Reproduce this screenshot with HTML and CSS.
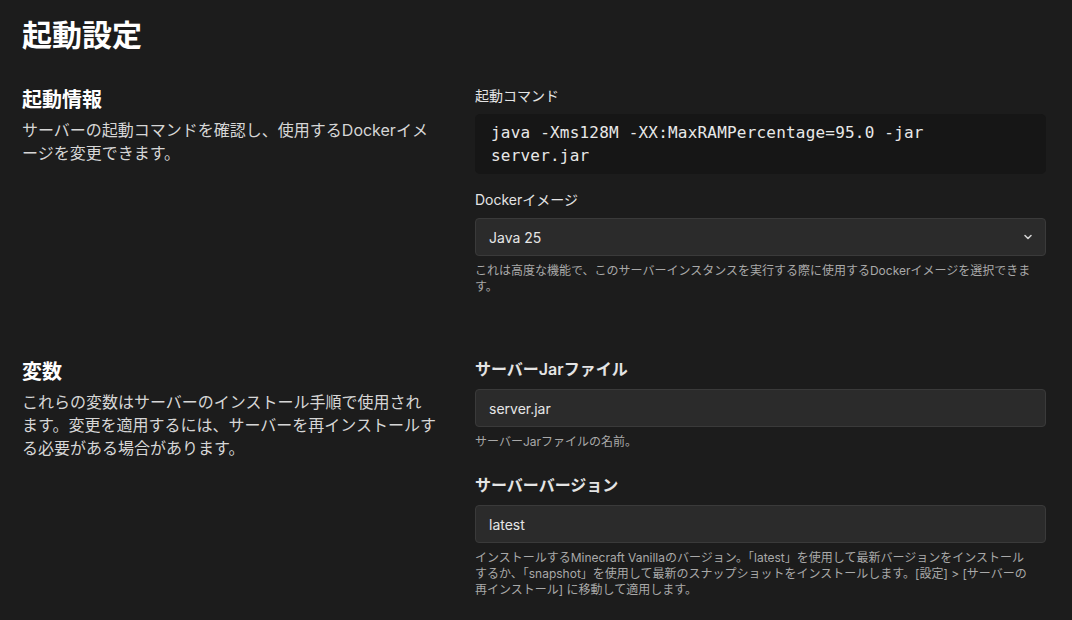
FILE: index.html
```html
<!DOCTYPE html>
<html lang="ja">
<head>
    <meta charset="UTF-8">
    <meta name="viewport" content="width=device-width, initial-scale=1.0">
    <title>起動設定</title>
    <link rel="stylesheet" href="styles.css">
</head>
<body>
    <main class="page">
        <h1 class="page__title">起動設定</h1>

        <section class="section">
            <div class="section__info">
                <h2 class="section__title">起動情報</h2>
                <p class="section__desc">サーバーの起動コマンドを確認し、使用するDockerイメージを変更できます。</p>
            </div>
            <div class="section__fields">
                <div class="field">
                    <div class="field__label">起動コマンド</div>
                    <code class="command">java -Xms128M -XX:MaxRAMPercentage=95.0 -jar server.jar</code>
                </div>
                <div class="field">
                    <div class="field__label">Dockerイメージ</div>
                    <div class="select">
                        <span>Java 25</span>
                        <svg class="select__icon" width="12" height="12" viewBox="0 0 12 12">
                            <path d="M3 4.5 6 7.5 9 4.5" fill="none" stroke="currentColor" stroke-width="1.6" stroke-linecap="round" stroke-linejoin="round"/>
                        </svg>
                    </div>
                    <p class="field__help">これは高度な機能で、このサーバーインスタンスを実行する際に使用するDockerイメージを選択できます。</p>
                </div>
            </div>
        </section>

        <section class="section section--vars">
            <div class="section__info">
                <h2 class="section__title">変数</h2>
                <p class="section__desc">これらの変数はサーバーのインストール手順で使用され<br>ます。変更を適用するには、サーバーを再インストールす<br>る必要がある場合があります。</p>
            </div>
            <div class="section__fields">
                <div class="field field--var">
                    <div class="field__label field__label--strong">サーバーJarファイル</div>
                    <div class="input">server.jar</div>
                    <p class="field__help">サーバーJarファイルの名前。</p>
                </div>
                <div class="field field--var">
                    <div class="field__label field__label--strong">サーバーバージョン</div>
                    <div class="input">latest</div>
                    <p class="field__help">インストールするMinecraft Vanillaのバージョン。「latest」を使用して最新バージョンをインストール<br>するか、「snapshot」を使用して最新のスナップショットをインストールします。[設定] &gt; [サーバーの<br>再インストール] に移動して適用します。</p>
                </div>
            </div>
        </section>
    </main>
</body>
</html>
```

FILE: styles.css
```css
:root {
    --pageBgColor: #1c1c1c;
    --fieldBgColor: #2b2b2b;
    --fieldBorderColor: #3a3a3a;
    --codeBgColor: #161616;
}

html,
body {
    height: 100%;
}

body {
    margin: 0;
    background-color: var(--pageBgColor);
    color: #fff;
    font-family: Inter, "Noto Sans CJK JP", sans-serif;
}

.page {
    padding: 17px 26px 0 22px;
}

.page__title {
    margin: 0 0 33px;
    font-size: 30px;
    line-height: 36px;
    font-weight: 700;
}

.section {
    display: grid;
    grid-template-columns: 420px 1fr;
    column-gap: 33px;
    align-items: start;
}

.section--vars {
    margin-top: 62px;
}

.section__title {
    margin: 0;
    font-size: 20px;
    line-height: 28px;
    font-weight: 700;
}

.section--vars .section__title {
    margin-top: 1px;
}

.section__desc {
    margin: 5px 0 0;
    font-size: 16px;
    line-height: 23px;
    color: #d6d6d6;
}

.field + .field {
    margin-top: 16px;
}

.field--var + .field--var {
    margin-top: 23px;
}

.field__label {
    margin-bottom: 8px;
    font-size: 14px;
    line-height: 20px;
    color: #e4e4e4;
}

.field__label--strong {
    font-size: 16px;
    line-height: 24px;
    font-weight: 600;
}

.command {
    display: block;
    padding: 7px 20px 7px 16px;
    border-radius: 5px;
    background-color: var(--codeBgColor);
    color: #e8e8e8;
    font-family: "DejaVu Sans Mono", monospace;
    font-size: 16px;
    line-height: 23px;
    letter-spacing: 0.2px;
}

.select,
.input {
    display: flex;
    align-items: center;
    box-sizing: border-box;
    height: 38px;
    padding: 0 13px;
    border: 1px solid var(--fieldBorderColor);
    border-radius: 4px;
    background-color: var(--fieldBgColor);
    color: #e6e6e6;
    font-size: 14px;
}

.select {
    justify-content: space-between;
}

.select__icon {
    margin-right: -2px;
    color: #d0d0d0;
}

.field__help {
    margin: 7px 0 0;
    font-size: 12px;
    line-height: 16px;
    color: #a9a9a9;
}
```
